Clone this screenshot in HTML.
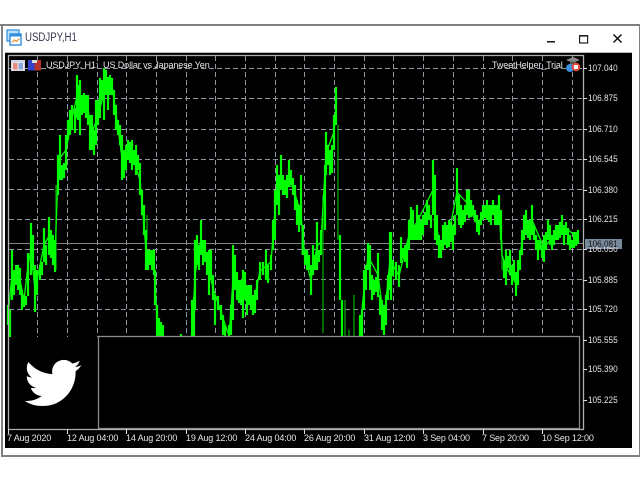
<!DOCTYPE html>
<html><head><meta charset="utf-8">
<style>
html,body{margin:0;padding:0;background:#fff}
#p{position:relative;width:640px;height:480px;overflow:hidden;background:#fff;font-family:"Liberation Sans",sans-serif}
.a{position:absolute}
.t{position:absolute;color:#e6e6e6;font-size:9px;line-height:11px;white-space:nowrap;filter:blur(.25px)}
.y{font-size:9.4px;transform:scaleX(.875);transform-origin:0 50%;left:588px;margin-top:-1px}
</style></head><body>
<div id="p">
<div class="a" style="left:0;top:24px;width:640px;height:2px;background:#808080"></div>
<div class="a" style="left:1px;top:24px;width:2px;height:433px;background:#808080"></div>
<div class="a" style="left:639px;top:24px;width:1px;height:433px;background:#808080"></div>
<div class="a" style="left:1px;top:455px;width:639px;height:2px;background:#808080"></div>
<div class="a" style="left:5px;top:53px;width:627px;height:395px;background:#000"></div>
<div class="a" style="left:5px;top:52px;width:627px;height:1px;background:#bbb"></div>
<div class="a" style="left:25px;top:30px;font-size:11.500px;line-height:16px;color:#3a3450;transform:scaleX(.84);transform-origin:0 50%;white-space:nowrap;filter:blur(.2px)">USDJPY,H1</div>
<svg class="a" style="left:0;top:0" width="640" height="480" viewBox="0 0 640 480">
<!-- window icon -->
<rect x="7" y="30" width="12" height="11" fill="#bfe0f8" stroke="#3d9be0" stroke-width="1.4"/>
<rect x="10" y="34" width="11" height="11" fill="#fff" stroke="#2f8ede" stroke-width="1.4"/>
<rect x="10" y="34" width="11" height="2.500" fill="#2f8ede"/>
<path d="M12 42.500l2.500-2.500 2 1.500 3-3" fill="none" stroke="#e08a30" stroke-width="1.2"/>
<!-- title buttons -->
<rect x="547" y="41" width="8" height="1.6" fill="#222"/>
<rect x="579.6" y="35.6" width="8" height="7.4" fill="none" stroke="#222" stroke-width="1.2"/>
<rect x="579" y="35" width="9" height="1.6" fill="#222"/>
<path d="M613.5 34.5l8 8M621.5 34.5l-8 8" stroke="#111" stroke-width="1.5" fill="none"/>
<!-- grid -->
<g stroke="#8f98a2" stroke-width="1" stroke-dasharray="5 3" fill="none">
<path d="M9 68.500H583M9 98.500H583M9 129.500H583M9 159.500H583M9 189.500H583M9 219.500H583M9 249.500H583M9 279.500H583M9 309.500H583"/>
<path d="M37.500 56V337M67.500 56V337M97.500 56V337M126.500 56V337M156.500 56V337M186.500 56V337M215.500 56V337M245.500 56V337M275.500 56V337M304.500 56V337M334.500 56V337M364.500 56V337M393.500 56V337M423.500 56V337M453.500 56V337M483.500 56V337M512.500 56V337M542.500 56V337M572.500 56V337"/>
</g>
<!-- price line -->
<path d="M8 243.500H583" stroke="#7d8387" stroke-width="1"/>
<!-- thin series -->
<path fill="none" stroke="#00b400" stroke-width="1.2" d="M56 270V185M323 333V195M338 240V125M345 337V300M354 337V295M349 337V330M302 255V225M502 270V240M147 215V240"/>
<!-- connecting trace -->
<polyline fill="none" stroke="#00ff00" stroke-width="1.3" stroke-linejoin="round" points="8,315 12,275 20,280 24,300 28,265 31,250 35,290 44,245 49,236 55,256 58,175 60,158 66,150 72,118 77,96 80,108 88,110 92,132 96,122 104,94 112,86 118,128 122,158 132,155 140,180 146,250 154,262 157,320 161,336"/>
<polyline fill="none" stroke="#00ff00" stroke-width="1.3" stroke-linejoin="round" points="192,336 195,275 201,238 207,263 213,288 221,312 229,336 233,280 243,295 253,305 260,271 271,262 277,185 285,187 293,186 301,215 305,258 311,280 317,246 321,242 326,153 334,132 336,106"/>
<polyline fill="none" stroke="#00ff00" stroke-width="1.3" stroke-linejoin="round" points="360,330 364,290 368,256 378,275 384,320 390,260 399,276 409,235 417,222 433,190 437,230 441,249 449,233 457,192 467,203 477,224 487,210 499,210 502,255 506,267 516,284 524,228 532,220 544,248 562,225 578,238"/>
<!-- main series -->
<path fill="none" stroke="#00ff00" stroke-width="2.2" d="M8 305V325M10 310V338M12 250V300M14 270V295M16 265V285M18 265V290M20 268V295M22 290V310M24 295V307M26 296V305M28 253V296M31 223V275M33 235V270M35 265V312M37 270V295M40 265V280M42 262V275M44 228V262M46 245V265M49 217V255M51 230V258M53 235V265M55 240V272M58 155V195M60 135V180M62 165V180M64 163V178M66 135V170M68 120V140M70 110V135M72 105V130M75 108V133M77 75V118M78 85V120M80 80V135M82 95V115M84 93V113M86 95V118M88 95V125M90 115V150M92 115V150M94 130V155M96 100V145M98 100V125M100 78V118M102 80V100M104 68V120M106 70V95M108 77V110M110 75V95M112 78V95M114 90V115M116 105V130M118 120V135M120 125V145M122 135V180M124 150V178M126 145V170M128 140V160M130 142V163M132 140V170M134 150V165M136 145V175M138 155V170M140 163V195M142 190V215M144 205V235M146 230V270M148 250V270M150 250V265M152 250V270M154 250V275M155 270V305M157 305V337M159 318V337M161 322V337M163 325V337M181 334V337M192 300V337M194 297V337M195 240V310M197 235V265M199 245V270M201 220V255M203 240V265M205 240V262M207 252V275M209 250V295M211 250V280M213 275V300M215 295V325M218 296V310M221 305V320M223 315V335M225 325V337M229 325V337M231 305V335M233 245V320M235 255V290M237 272V300M239 280V303M241 280V305M243 270V318M245 272V300M247 285V315M249 285V305M251 285V310M253 295V315M255 290V313M257 280V300M260 262V280M263 262V275M266 250V280M268 265V283M271 255V270M273 220V250M275 190V240M277 165V205M279 175V215M281 155V190M283 175V195M285 180V195M287 175V198M289 160V187M291 170V185M293 178V195M295 185V210M297 200V225M299 205V232M301 175V225M303 225V255M305 250V265M307 250V270M309 255V270M311 265V295M313 245V275M315 255V270M317 222V270M319 250V262M321 230V255M325 165V230M326 132V175M328 145V165M330 150V175M332 145V173M334 115V150M336 87V125M340 235V300M342 300V337M360 315V337M362 310V337M364 270V310M366 265V290M368 243V270M370 245V290M372 275V300M374 280V295M376 277V292M378 253V297M380 295V315M382 300V330M384 305V335M386 295V325M388 275V300M390 232V290M391 232V300M393 260V276M396 262V280M399 265V287M401 237V263M403 248V258M405 245V262M407 243V268M409 220V250M411 207V240M413 210V240M415 225V240M417 205V240M419 215V240M421 220V240M423 215V235M425 212V225M427 200V225M429 205V220M431 215V228M433 160V215M435 175V240M437 215V245M439 235V258M441 240V258M443 225V250M445 222V245M447 225V248M449 220V247M451 222V242M453 225V250M455 215V235M457 168V215M459 195V225M461 205V228M463 210V225M465 205V222M467 190V215M469 190V218M471 200V217M473 205V215M475 210V222M477 215V232M479 220V235M481 212V225M483 205V220M485 205V218M487 200V220M489 205V222M491 205V225M493 200V215M495 205V225M497 205V225M499 195V225M501 210V240M504 260V278M506 250V285M508 256V268M510 250V275M512 265V285M514 260V280M516 272V296M518 260V285M520 250V270M522 230V255M524 215V240M526 210V235M528 220V238M530 220V240M532 205V235M534 225V240M536 235V250M538 240V260M540 240V250M542 245V258M544 235V262M546 232V250M548 220V240M550 225V245M552 235V250M554 230V245M556 225V240M558 225V240M560 222V238M562 215V235M564 225V245M566 222V235M568 228V245M570 235V250M572 240V248M574 232V248M576 232V246M578 230V244"/>
<!-- bottom panels -->
<rect x="9" y="337" width="89" height="92" fill="#000"/>
<rect x="98.500" y="336.500" width="481" height="92" fill="#000" stroke="#8a8a8a" stroke-width="1.3"/>
<!-- frame -->
<path d="M8.500 55V429.500H583.500V55.500H8.500" fill="none" stroke="#b0b0b0" stroke-width="1.3"/>
<path d="M8.500 429V434M67.500 429V434M126.500 429V434M186.500 429V434M245.500 429V434M304.500 429V434M364.500 429V434M423.500 429V434M483.500 429V434M542.500 429V434" stroke="#ddd"/>
<path d="M583 68.500h4M583 98.500h4M583 129.500h4M583 159.500h4M583 190.500h4M583 219.500h4M583 249.500h4M583 280.500h4M583 309.500h4M583 340.500h4M583 369.500h4M583 400.500h4" stroke="#ddd"/>
<!-- bird -->
<path fill="#fff" transform="translate(24.500 354.500) scale(2.37)" d="M23.953 4.57a10 10 0 01-2.825.775 4.958 4.958 0 002.163-2.723c-.951.555-2.005.959-3.127 1.184a4.92 4.92 0 00-8.384 4.482C7.69 8.095 4.067 6.13 1.64 3.162a4.822 4.822 0 00-.666 2.475c0 1.71.87 3.213 2.188 4.096a4.904 4.904 0 01-2.228-.616v.06a4.923 4.923 0 003.946 4.827 4.996 4.996 0 01-2.212.085 4.936 4.936 0 004.604 3.417 9.867 9.867 0 01-6.102 2.105c-.39 0-.779-.023-1.17-.067a13.995 13.995 0 007.557 2.209c9.053 0 13.998-7.496 13.998-13.985 0-.21 0-.42-.015-.63A9.935 9.935 0 0024 4.59z"/>
<!-- chart icons -->
<rect x="11.500" y="60.500" width="13" height="10" fill="#f2ecef" stroke="#d8d8e0"/>
<rect x="13" y="63" width="4.500" height="6.500" fill="#e88a80"/>
<rect x="18.500" y="63" width="4.500" height="6.500" fill="#8aa8dc"/>
<rect x="11.500" y="60.500" width="13" height="2" fill="#c8d4ec"/>
<rect x="28" y="60" width="6.500" height="10.500" fill="#3344cc"/>
<rect x="34.500" y="60" width="6.500" height="10.500" fill="#b8322e"/>
<rect x="32" y="60" width="5" height="3" fill="#ddd"/>
<!-- expert icon -->
<path d="M566 60l7-3 7 3-7 3z" fill="#8a8a8a"/>
<rect x="570" y="61.500" width="6" height="3.500" fill="#555"/>
<circle cx="570" cy="68" r="4" fill="#3c8fe0"/>
<circle cx="576" cy="67" r="4.300" fill="#e8483a"/>
<rect x="574" y="65" width="4" height="4" fill="#fff"/>
</svg>
<div class="t" style="left:46px;top:60px;letter-spacing:-.1px">USDJPY, H1:&nbsp; US Dollar vs Japanese Yen</div>
<div class="t" style="left:492px;top:60px;letter-spacing:-.12px">TweetHelper_Trial</div>
<div class="a" style="left:585px;top:239px;width:37px;height:10px;background:#78899c"></div>
<div class="t y" style="top:63px">107.040</div>
<div class="t y" style="top:93px">106.875</div>
<div class="t y" style="top:124px">106.710</div>
<div class="t y" style="top:154px">106.545</div>
<div class="t y" style="top:185px">106.380</div>
<div class="t y" style="top:214px">106.215</div>
<div class="t y" style="top:244px">106.050</div>
<div class="t y" style="top:275px">105.885</div>
<div class="t y" style="top:304px">105.720</div>
<div class="t y" style="top:335px">105.555</div>
<div class="t y" style="top:364px">105.390</div>
<div class="t y" style="top:395px">105.225</div>
<div class="a" style="left:585px;top:239px;width:37px;height:7px;background:#78899c"></div>
<div class="t y" style="top:239px;color:#111">106.081</div>
<div class="t" style="left:7px;top:433px;letter-spacing:-.15px">7 Aug 2020</div>
<div class="t" style="left:67px;top:433px;letter-spacing:-.15px">12 Aug 04:00</div>
<div class="t" style="left:126px;top:433px;letter-spacing:-.15px">14 Aug 20:00</div>
<div class="t" style="left:186px;top:433px;letter-spacing:-.15px">19 Aug 12:00</div>
<div class="t" style="left:245px;top:433px;letter-spacing:-.15px">24 Aug 04:00</div>
<div class="t" style="left:304px;top:433px;letter-spacing:-.15px">26 Aug 20:00</div>
<div class="t" style="left:364px;top:433px;letter-spacing:-.15px">31 Aug 12:00</div>
<div class="t" style="left:423px;top:433px;letter-spacing:-.15px">3 Sep 04:00</div>
<div class="t" style="left:482px;top:433px;letter-spacing:-.15px">7 Sep 20:00</div>
<div class="t" style="left:542px;top:433px;letter-spacing:-.15px">10 Sep 12:00</div>
</div>
</body></html>
